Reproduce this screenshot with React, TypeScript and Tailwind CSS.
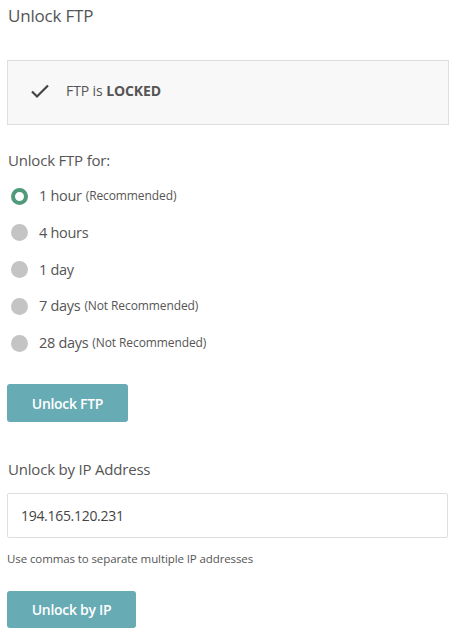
import React, { useState } from 'react';

const options = [
  { id: '1h', label: '1 hour', note: '(Recommended)' },
  { id: '4h', label: '4 hours', note: '' },
  { id: '1d', label: '1 day', note: '' },
  { id: '7d', label: '7 days', note: '(Not Recommended)' },
  { id: '28d', label: '28 days', note: '(Not Recommended)' },
];

export default function App() {
  const [selected, setSelected] = useState('1h');
  const [ip, setIp] = useState('194.165.120.231');

  return (
    <div className="w-[456px] min-h-[636px] bg-white px-[7px] pt-[3px] text-[#555] font-['Open_Sans',sans-serif]">
      <h2 className="text-[17px] leading-[26px] text-[#555] pl-[1px] tracking-[-0.2px]">Unlock FTP</h2>

      <div className="mt-[31px] h-[65px] border border-[#dedede] bg-[#f8f8f8] flex items-center pl-[22px] pb-[4px]">
        <svg width="20" height="16" viewBox="0 0 20 16" className="mr-[16px]">
          <path d="M2 8.5 L7 13.5 L18 2.5" fill="none" stroke="#444" strokeWidth="2.2" />
        </svg>
        <span className="text-[14px] text-[#555] tracking-[-0.1px]">
          FTP is <span className="font-bold">LOCKED</span>
        </span>
      </div>

      <div className="mt-[24px] pl-[1px] text-[15px] leading-[22px] tracking-[-0.2px]">Unlock FTP for:</div>

      <div className="mt-[14px] flex flex-col gap-[14.75px]">
        {options.map((o) => (
          <label key={o.id} className="flex items-center h-[22px] cursor-pointer" onClick={() => setSelected(o.id)}>
            {selected === o.id ? (
              <span className="ml-[4px] w-[17px] h-[17px] rounded-full border-[4px] border-[#519b7d] bg-white" />
            ) : (
              <span className="ml-[4px] w-[17px] h-[17px] rounded-full bg-[#c4c4c4]" />
            )}
            <span className="ml-[11px] text-[14.5px] text-[#555] tracking-[-0.3px]">{o.label}</span>
            {o.note && <span className="ml-[4px] text-[12px] text-[#555] tracking-[-0.1px]">{o.note}</span>}
          </label>
        ))}
      </div>

      <button className="mt-[30px] h-[38px] w-[121px] rounded-[3px] bg-[#67abb5] text-white text-[14px] font-semibold tracking-[-0.3px]">
        Unlock FTP
      </button>

      <div className="mt-[36px] pl-[1px] text-[15px] leading-[22px] tracking-[-0.2px]">Unlock by IP Address</div>

      <input
        value={ip}
        onChange={(e) => setIp(e.target.value)}
        className="mt-[13px] block w-[441px] h-[45px] border border-[#dedede] rounded-[2px] px-[13px] text-[14px] text-[#444] tracking-[-0.3px] outline-none"
      />

      <div className="mt-[12px] text-[11.5px] text-[#555] leading-[18px] tracking-[-0.1px]">Use commas to separate multiple IP addresses</div>

      <button className="mt-[23px] h-[37px] w-[129px] rounded-[3px] bg-[#67abb5] text-white text-[14px] font-semibold tracking-[-0.3px]">
        Unlock by IP
      </button>
    </div>
  );
}
